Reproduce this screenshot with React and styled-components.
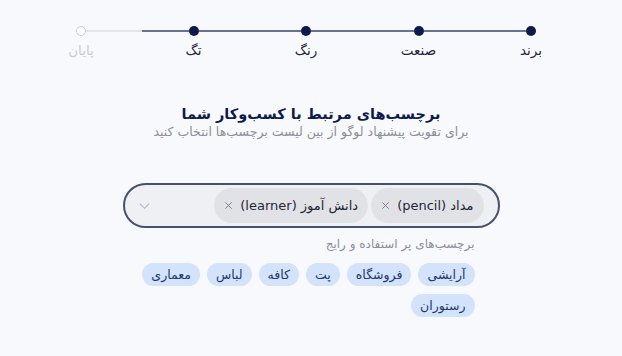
import React from 'react';
import styled, { createGlobalStyle } from 'styled-components';

const colors = {
    page: '#f8f9fc',
    navy: '#0d1b4c',
    line: '#6b7290',
    lineLight: '#e2e4ea',
    label: '#1f2638',
    muted: '#8b8f99',
    faint: '#c9ccd3',
    field: '#eff0f4',
    chip: '#e1e2e6',
    tag: '#d3e3fc',
    tagText: '#22376b',
};

const GlobalStyle = createGlobalStyle`
    body {
        margin: 0;
        background: ${colors.page};
        font-family: "DejaVu Sans", "Noto Sans", sans-serif;
    }
`;

const steps = [
    { label: 'برند', done: true },
    { label: 'صنعت', done: true },
    { label: 'رنگ', done: true },
    { label: 'تگ', done: true },
    { label: 'پایان', done: false },
];

const popular = ['آرایشی', 'فروشگاه', 'پت', 'کافه', 'لباس', 'معماری', 'رستوران'];

const CloseIcon = () => (
    <RemoveIcon viewBox="0 0 10 10">
        <path d="M1.5 1.5l7 7M8.5 1.5l-7 7" stroke="#7a7d88" strokeWidth="1.1" fill="none" />
    </RemoveIcon>
);

const App = () => (
    <Page dir="rtl">
        <GlobalStyle />
        <Stepper>
            {steps.map((step, i) => (
                <React.Fragment key={step.label}>
                    {i > 0 && <Connector $partial={!step.done} />}
                    <Step>
                        <Dot $done={step.done} />
                        <StepLabel $done={step.done}>{step.label}</StepLabel>
                    </Step>
                </React.Fragment>
            ))}
        </Stepper>

        <Heading>
            <h1 className="title">برچسب‌های مرتبط با کسب‌وکار شما</h1>
            <div className="subtitle">برای تقویت پیشنهاد لوگو از بین لیست برچسب‌ها انتخاب کنید</div>
        </Heading>

        <TagField>
            <Chip>
                مداد (pencil)
                <CloseIcon />
            </Chip>
            <Chip>
                دانش آموز (learner)
                <CloseIcon />
            </Chip>
            <Chevron viewBox="0 0 12 8">
                <path d="M1 1.5l5 5 5-5" fill="none" stroke="#b3b6bf" strokeWidth="1.2" />
            </Chevron>
        </TagField>

        <Popular>
            <div className="hint">برچسب‌های پر استفاده و رایج</div>
            <TagList>
                {popular.map((tag) => (
                    <Tag key={tag}>{tag}</Tag>
                ))}
            </TagList>
        </Popular>
    </Page>
);

const Page = styled.div`
    width: 622px;
    height: 356px;
    box-sizing: border-box;
    padding-top: 26px;
    display: flex;
    flex-direction: column;
    align-items: center;
`;

const Stepper = styled.div`
    width: 460px;
    margin-right: 10px;
    display: flex;
    align-items: flex-start;
`;

const Step = styled.div`
    width: 10px;
    display: flex;
    flex-direction: column;
    align-items: center;
`;

const Dot = styled.span`
    width: 10px;
    height: 10px;
    box-sizing: border-box;
    border-radius: 50%;
    background: ${(p) => (p.$done ? colors.navy : '#fff')};
    border: ${(p) => (p.$done ? 'none' : `1.5px solid ${colors.faint}`)};
`;

const StepLabel = styled.span`
    margin-top: 6px;
    white-space: nowrap;
    font-size: 13.5px;
    color: ${(p) => (p.$done ? colors.label : colors.faint)};
`;

const Connector = styled.span`
    flex: 1;
    height: 2px;
    margin-top: 4px;
    background: ${(p) =>
        p.$partial
            ? `linear-gradient(to left, ${colors.line} 46%, ${colors.lineLight} 46%)`
            : colors.line};
`;

const Heading = styled.div`
    margin-top: 48px;
    text-align: center;

    .title {
        margin: 0;
        font-size: 14.5px;
        font-weight: 700;
        color: ${colors.navy};
    }

    .subtitle {
        margin-top: 2px;
        font-size: 12.5px;
        color: ${colors.muted};
    }
`;

const TagField = styled.div`
    margin-top: 44px;
    width: 377px;
    height: 45px;
    box-sizing: border-box;
    border: 2px solid #48506f;
    border-radius: 24px;
    background: ${colors.field};
    display: flex;
    align-items: center;
    gap: 3px;
    padding: 0 14px 0 14px;
`;

const Chip = styled.div`
    height: 35px;
    padding: 0 10px 0 10px;
    border-radius: 18px;
    background: ${colors.chip};
    display: flex;
    align-items: center;
    gap: 7px;
    white-space: nowrap;
    font-size: 13px;
    color: ${colors.label};
`;

const RemoveIcon = styled.svg`
    width: 9px;
    height: 9px;
`;

const Chevron = styled.svg`
    width: 11px;
    height: 8px;
    margin-right: auto;
`;

const Popular = styled.div`
    width: 377px;
    box-sizing: border-box;
    padding: 0 25px 0 10px;
    margin-top: 9px;

    .hint {
        font-size: 12px;
        color: ${colors.muted};
    }
`;

const TagList = styled.div`
    margin-top: 12px;
    display: flex;
    flex-wrap: wrap;
    gap: 8px 7px;
`;

const Tag = styled.span`
    height: 23px;
    padding: 0 9px;
    border-radius: 12px;
    background: ${colors.tag};
    color: ${colors.tagText};
    font-size: 12.5px;
    display: flex;
    align-items: center;
`;

export default App;
